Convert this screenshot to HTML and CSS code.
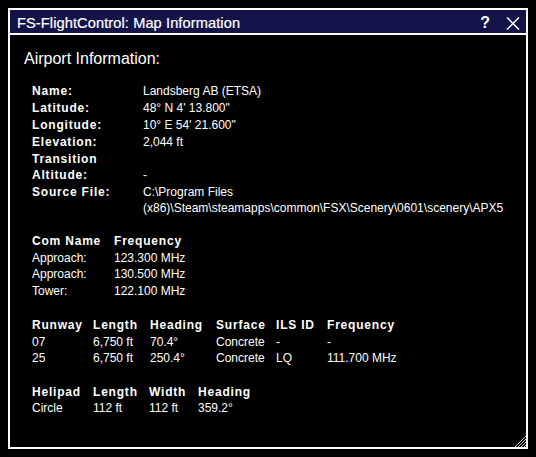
FILE: index.html
```html
<!DOCTYPE html>
<html>
<head>
<meta charset="utf-8">
<link rel="stylesheet" href="styles.css">
</head>
<body>
<div class="window">
  <div class="titlebar">
    <span class="title">FS-FlightControl: Map Information</span>
    <span class="help">?</span>
    <svg class="close" width="14" height="13" viewBox="0 0 14 13"><path d="M1 0.5 L13 12.5 M13 0.5 L1 12.5" stroke="#fff" stroke-width="1.5" fill="none"/></svg>
  </div>
  <div class="content">
    <h1 class="heading">Airport Information:</h1>
    <div class="info">
      <div class="lbl">Name:</div><div class="val">Landsberg AB (ETSA)</div>
      <div class="lbl">Latitude:</div><div class="val">48° N 4' 13.800"</div>
      <div class="lbl">Longitude:</div><div class="val">10° E 54' 21.600"</div>
      <div class="lbl">Elevation:</div><div class="val">2,044 ft</div>
      <div class="lbl">Transition<br>Altitude:</div><div class="val bottom">-</div>
      <div class="lbl">Source File:</div><div class="val clip">C:\Program Files (x86)\Steam\steamapps\common\FSX\Scenery\0601\scenery\APX51160.bgl</div>
    </div>

    <div class="tbl com">
      <div class="th">Com Name</div><div class="th">Frequency</div>
      <div>Approach:</div><div>123.300 MHz</div>
      <div>Approach:</div><div>130.500 MHz</div>
      <div>Tower:</div><div>122.100 MHz</div>
    </div>

    <div class="tbl runway">
      <div class="th">Runway</div><div class="th">Length</div><div class="th">Heading</div><div class="th">Surface</div><div class="th">ILS ID</div><div class="th">Frequency</div>
      <div>07</div><div>6,750 ft</div><div>70.4°</div><div>Concrete</div><div>-</div><div>-</div>
      <div>25</div><div>6,750 ft</div><div>250.4°</div><div>Concrete</div><div>LQ</div><div>111.700 MHz</div>
    </div>

    <div class="tbl helipad">
      <div class="th">Helipad</div><div class="th">Length</div><div class="th">Width</div><div class="th">Heading</div>
      <div>Circle</div><div>112 ft</div><div>112 ft</div><div>359.2°</div>
    </div>
  </div>
  <svg class="grip" width="12" height="12" viewBox="0 0 12 12">
    <path d="M12 1 L1 12 M12 4 L4 12 M12 7 L7 12 M12 10 L10 12" stroke="#c8c8c8" stroke-width="1" fill="none"/>
  </svg>
</div>
</body>
</html>
```

FILE: styles.css
```css
html, body {
  background: #000;
}
body {
  margin: 8px;
  font-family: "Liberation Sans", Arial, sans-serif;
  color: #fff;
}
.window {
  position: relative;
  box-sizing: border-box;
  width: 520px;
  height: 441px;
  border: 2px solid #fff;
  display: flex;
  flex-direction: column;
  overflow: hidden;
}
.titlebar {
  box-sizing: border-box;
  height: 25px;
  flex: none;
  background: #13134a;
  border-bottom: 2px solid #fff;
  display: flex;
  align-items: center;
  padding: 2px 6px 0 7px;
}
.title {
  flex: 1;
  font-size: 14.6px;
  line-height: 20px;
  letter-spacing: 0.1px;
  -webkit-text-stroke: 0.2px #fff;
}
.help {
  font-weight: bold;
  font-size: 16px;
  line-height: 20px;
  margin-right: 16px;
}
.close {
  display: block;
  margin-top: 1px;
}
.content {
  padding: 15px 22px 0 14px;
  font-size: 12px;
}
.heading {
  margin: 0;
  font-size: 16px;
  font-weight: normal;
  line-height: 17px;
}
.info {
  margin: 16px 0 0 8px;
  display: grid;
  grid-template-columns: 111px minmax(0, 1fr);
  row-gap: 1px;
  line-height: 16px;
}
.lbl, .th {
  font-weight: bold;
  letter-spacing: 0.8px;
}
.val.bottom {
  align-self: end;
}
.val.clip {
  overflow: hidden;
}
.tbl {
  margin: 17px 0 0 8px;
  display: grid;
  line-height: 16.5px;
  white-space: nowrap;
}
.com {
  grid-template-columns: 82px auto;
  justify-content: start;
}
.runway {
  margin-top: 18px;
  grid-template-columns: 61px 57px 66px 60px 51px auto;
  justify-content: start;
}
.helipad {
  grid-template-columns: 61px 56px 49px auto;
  justify-content: start;
}
.grip {
  position: absolute;
  right: 0;
  bottom: 0;
}
```
